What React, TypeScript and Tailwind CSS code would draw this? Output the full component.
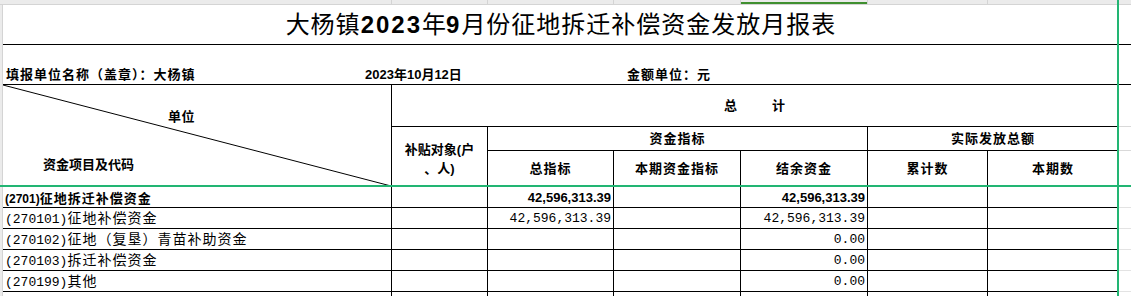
import React from "react";

type Row = {
  code: string;
  name: string;
  total?: string;
  remain?: string;
  bold?: boolean;
};

const rows: Row[] = [
  { code: "(2701)", name: "征地拆迁补偿资金", total: "42,596,313.39", remain: "42,596,313.39", bold: true },
  { code: "(270101)", name: "征地补偿资金", total: "42,596,313.39", remain: "42,596,313.39" },
  { code: "(270102)", name: "征地（复垦）青苗补助资金", remain: "0.00" },
  { code: "(270103)", name: "拆迁补偿资金", remain: "0.00" },
  { code: "(270199)", name: "其他", remain: "0.00" },
];

const rowStarts = ["row-start-7", "row-start-8", "row-start-9", "row-start-10", "row-start-11"];

function Num({ value, bold }: { value?: string; bold?: boolean }) {
  if (!value) return null;
  return bold ? (
    <span className="font-['Liberation_Sans',sans-serif] text-[13px] font-bold leading-[14px]">{value}</span>
  ) : (
    <span className="font-['Liberation_Mono',monospace] text-[13px] leading-[14px]">{value}</span>
  );
}

export default function App() {
  const head = "flex items-center justify-center border-b border-r border-black text-[13px] font-bold tracking-[1px]";
  return (
    <div className="relative h-[296px] w-[1131px] overflow-hidden bg-white font-['Liberation_Sans','Noto_Sans_CJK_SC',sans-serif] text-black">
      <div className="grid grid-cols-[3px_389px_96px_126px_127px_127px_120px_131px_12px] grid-rows-[5px_40px_40px_42px_24px_36px_21px_21px_21px_21px_21px_4px]">
        {/* sheet column header strip */}
        <div className="col-span-full row-start-1 flex border-b border-[#d4d4d4] bg-[#ebebeb]">
          <div className="w-[392px] border-r border-[#d4d4d4]" />
          <div className="w-[96px] border-r border-[#d4d4d4]" />
          <div className="w-[126px] border-r border-[#d4d4d4]" />
          <div className="w-[127px] border-r border-[#d4d4d4]" />
          <div className="flex w-[127px] items-end border-r border-[#d4d4d4]">
            <div className="h-[2px] w-full bg-[#3f8f2f]" />
          </div>
          <div className="w-[120px] border-r border-[#d4d4d4]" />
          <div className="flex-1" />
        </div>

        <div className="col-start-1 row-start-2 row-span-11 border-r border-[#d4d4d4] bg-[#ebebeb]" />

        {/* title */}
        <div className="col-start-2 col-span-7 row-start-2 flex items-center justify-center border-b border-black text-[24px] leading-none">
          <span className="tracking-[1px]">大杨镇</span>
          <span className="font-bold tracking-[2px]">2023</span>
          <span>年</span>
          <span className="font-bold tracking-[2px]">9</span>
          <span className="tracking-[1px]">月份征地拆迁补偿资金发放月报表</span>
        </div>
        <div className="col-start-9 row-start-2 border-b border-black" />

        {/* info row */}
        <div className="col-start-2 col-span-8 row-start-3 flex items-end border-b border-black pb-[1px] text-[13px] font-bold leading-[16px]">
          <span className="w-[362px] pl-[3px] tracking-[1px]">填报单位名称（盖章）：大杨镇</span>
          <span className="w-[262px]">2023年10月12日</span>
          <span className="tracking-[1px]">金额单位：元</span>
        </div>

        {/* diagonal header */}
        <div className="relative col-start-2 row-start-4 row-span-3 flex flex-col border-b border-r border-black text-[13px] font-bold">
          <svg className="absolute inset-0 h-full w-full" preserveAspectRatio="none">
            <line x1="0" y1="0" x2="100%" y2="100%" stroke="#000" strokeWidth="1" />
          </svg>
          <span className="pl-[165px] pt-[24px] leading-[16px] tracking-[0.5px]">单位</span>
          <span className="pl-[40px] pt-[32px] leading-[16px]">资金项目及代码</span>
        </div>

        <div className={`col-start-3 col-span-6 row-start-4 gap-[34px] ${head}`}>
          <span>总</span>
          <span>计</span>
        </div>
        <div className="col-start-9 row-start-4 border-b border-[#d9d9d9]" />

        <div className="col-start-3 row-start-5 row-span-2 flex flex-col items-center justify-center border-b border-r border-black pt-[4px] text-[13px] font-bold leading-[19px]">
          <span>补贴对象(户</span>
          <span>、人)</span>
        </div>
        <div className={`col-start-4 col-span-3 row-start-5 ${head}`}>资金指标</div>
        <div className={`col-start-7 col-span-2 row-start-5 ${head}`}>实际发放总额</div>
        <div className="col-start-9 row-start-5 border-b border-[#d9d9d9]" />

        <div className={`col-start-4 row-start-6 ${head}`}>总指标</div>
        <div className={`col-start-5 row-start-6 ${head}`}>本期资金指标</div>
        <div className={`col-start-6 row-start-6 ${head}`}>结余资金</div>
        <div className={`col-start-7 row-start-6 ${head}`}>累计数</div>
        <div className={`col-start-8 row-start-6 ${head}`}>本期数</div>
        <div className="col-start-9 row-start-6 border-b border-[#d9d9d9]" />

        {/* data rows */}
        {rows.map((r, i) => (
          <React.Fragment key={r.code}>
            <div className={`col-start-2 flex items-end border-b border-r border-black pl-[2px] ${rowStarts[i]}`}>
              {r.bold ? (
                <span className="text-[12px] font-bold leading-[15px]">
                  {r.code}
                  <span className="text-[13px] tracking-[1px]">{r.name}</span>
                </span>
              ) : (
                <span className="leading-[17px]">
                  <span className="font-['Liberation_Mono',monospace] text-[13px]">{r.code}</span>
                  <span className="font-['Noto_Sans_CJK_SC',sans-serif] text-[14px] tracking-[1px]">{r.name}</span>
                </span>
              )}
            </div>
            <div className={`col-start-3 border-b border-r border-black ${rowStarts[i]}`} />
            <div className={`col-start-4 flex items-end justify-end border-b border-r border-black pb-[2px] pr-[2px] ${rowStarts[i]}`}>
              <Num value={r.total} bold={r.bold} />
            </div>
            <div className={`col-start-5 border-b border-r border-black ${rowStarts[i]}`} />
            <div className={`col-start-6 flex items-end justify-end border-b border-r border-black pb-[2px] pr-[2px] ${rowStarts[i]}`}>
              <Num value={r.remain} bold={r.bold} />
            </div>
            <div className={`col-start-7 border-b border-r border-black ${rowStarts[i]}`} />
            <div className={`col-start-8 border-b border-r border-black ${rowStarts[i]}`} />
            <div className={`col-start-9 border-b border-[#e3e3e3] ${rowStarts[i]}`} />
          </React.Fragment>
        ))}

        {/* partial row */}
        <div className="col-start-2 row-start-12 border-r border-black" />
        <div className="col-start-3 row-start-12 border-r border-black" />
        <div className="col-start-4 row-start-12 border-r border-black" />
        <div className="col-start-5 row-start-12 border-r border-black" />
        <div className="col-start-6 row-start-12 border-r border-black" />
        <div className="col-start-7 row-start-12 border-r border-black" />
        <div className="col-start-8 row-start-12 border-r border-black" />
      </div>

      {/* selection / freeze lines */}
      <div className="absolute left-[1117px] top-0 h-full w-[2px] bg-[#22b573]" />
      <div className="absolute left-0 top-[185px] h-[2px] w-[1131px] bg-[#22b573]" />
    </div>
  );
}
